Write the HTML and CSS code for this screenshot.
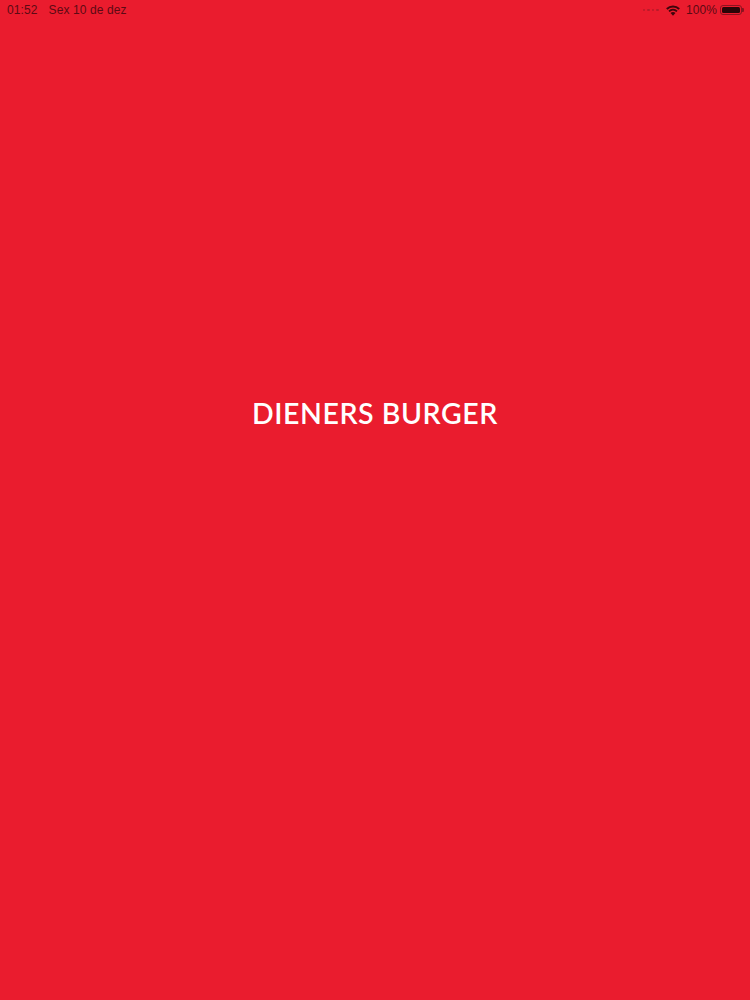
FILE: index.html
```
<!DOCTYPE html>
<html lang="pt">
<head>
<meta charset="utf-8">
<title>Diener's Burger</title>
<link rel="stylesheet" href="styles.css">
</head>
<body>
<main class="screen">
  <header class="status">
    <div class="status-left">
      <span>01:52</span>
      <span>Sex 10 de dez</span>
    </div>
    <div class="status-right">
      <div class="dots"><i></i><i></i><i></i><i></i></div>
      <svg class="wifi" width="14" height="11" viewBox="0 0 14 11"><path d="M7 10.8 4.5 8a3.4 3.4 0 0 1 5 0Z" fill="#3d060c"/><path d="M3.6 7.1A5 5 0 0 1 10.4 7.1L11.6 5.7A6.6 6.6 0 0 0 2.4 5.7Z" fill="#3d060c"/><path d="M1.5 4.8A7.8 7.8 0 0 1 12.5 4.8L13.9 3.3A9.8 9.8 0 0 0 .1 3.3Z" fill="#3d060c"/></svg>
      <span class="pct">100%</span>
      <div class="battery"><div class="battery-fill"></div><div class="battery-nub"></div></div>
    </div>
  </header>
  <div class="brand"><h1>DIENERS BURGER</h1></div>
</main>
</body>
</html>
```
FILE: styles.css
```
* { box-sizing: border-box; }
html, body { margin: 0; height: 100%; }
.screen {
  width: 750px;
  height: 1000px;
  background: #ea1c2e;
  display: flex;
  flex-direction: column;
  overflow: hidden;
}
.status {
  height: 20px;
  flex: none;
  display: flex;
  justify-content: space-between;
  align-items: center;
  padding: 0 6px 0 7px;
  font: 12px/20px "Liberation Sans", Arial, sans-serif;
  letter-spacing: 0.1px;
  color: #5c0a14;
}
.status-left { display: flex; gap: 11px; }
.status-right { display: flex; align-items: center; }
.dots { display: flex; gap: 2px; margin-right: 7px; }
.dots i { width: 2.5px; height: 2.5px; border-radius: 50%; background: #b81a2a; }
.wifi { margin-right: 6px; }
.pct { margin-right: 3px; }
.battery {
  width: 22px;
  height: 10px;
  border: 1px solid #8c1320;
  border-radius: 3px;
  padding: 1px;
  position: relative;
  margin-right: 2px;
}
.battery-fill { width: 100%; height: 100%; background: #2a0508; border-radius: 1.5px; }
.battery-nub {
  position: absolute;
  right: -3px;
  top: 2px;
  width: 2px;
  height: 4px;
  background: #8c1320;
  border-radius: 0 1px 1px 0;
}
.brand {
  height: 786px;
  flex: none;
  display: flex;
  align-items: center;
  justify-content: center;
}
.brand h1 {
  margin: 0;
  font: 600 28.5px/32px Lato, sans-serif;
  color: #fff;
  letter-spacing: 0.55px;
}
```
